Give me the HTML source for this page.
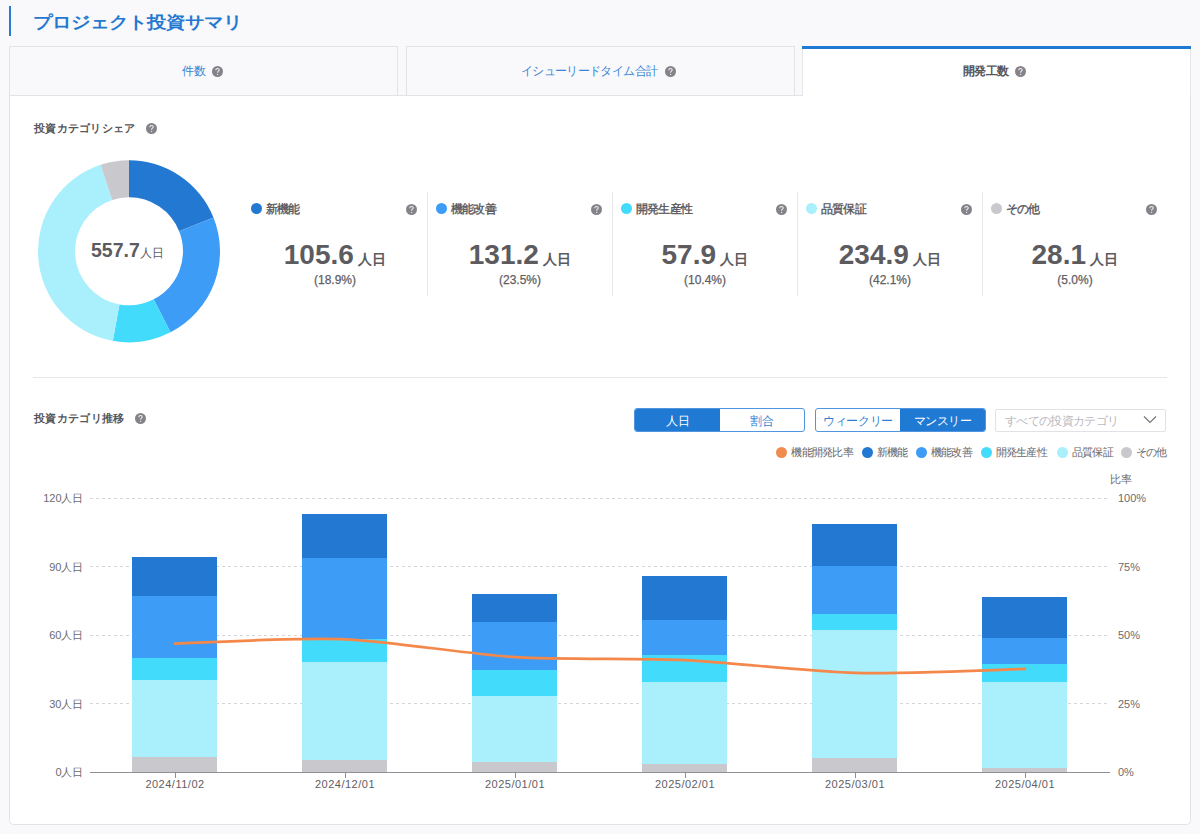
<!DOCTYPE html><html lang="ja"><head><meta charset="utf-8"><style>
html,body{margin:0;padding:0;}
body{width:1200px;height:834px;overflow:hidden;background:#f9f8fb;font-family:"Liberation Sans",sans-serif;position:relative;}
.a{position:absolute;white-space:nowrap;}
.q{position:absolute;border-radius:50%;background:#858389;color:#fff;font-weight:bold;text-align:center;font-family:"Liberation Sans",sans-serif;}
.tab{position:absolute;box-sizing:border-box;border:1px solid #e3e2e7;background:#f9f8fb;}
.dot{position:absolute;border-radius:50%;}
</style></head><body><div class="a" style="left:9px;top:6px;width:2px;height:30px;background:#2b7bd0"></div>
<div class="a" style="left:33px;top:10.5px;font-size:19px;font-weight:bold;color:#2379d0;line-height:24px;transform:scaleY(0.88)">プロジェクト投資サマリ</div>
<div class="a" style="left:9px;top:95px;width:1182px;height:730px;box-sizing:border-box;border:1px solid #e3e2e7;border-top:none;border-radius:0 0 5px 5px;background:#fff"></div>
<div class="tab" style="left:9px;top:46px;width:389px;height:50px;border-bottom:none"></div>
<div class="tab" style="left:406px;top:46px;width:389px;height:50px;border-bottom:none"></div>
<div class="a" style="left:9px;top:95px;width:793px;height:1px;background:#e3e2e7"></div>
<div class="tab" style="left:802px;top:49px;width:389px;height:47px;background:#fff;border-bottom:none;border-top:none;border-color:#e6e5ea"></div>
<div class="a" style="left:802px;top:46px;width:389px;height:3px;background:#2079d2"></div>
<div class="a" style="left:182px;top:63px;font-size:12px;color:#3a85d5;line-height:16px">件数</div>
<svg class="a" style="left:211.9px;top:66.1px" width="11" height="11" viewBox="0 0 11 11"><circle cx="5.5" cy="5.5" r="5.5" fill="#858389"/><path d="M3.85 4.2C3.85 3.15 4.6 2.5 5.55 2.5C6.5 2.5 7.2 3.15 7.2 4.05C7.2 5.1 5.6 5.3 5.6 6.45L5.6 6.8" stroke="#eeeef0" stroke-width="1.05" fill="none"/><circle cx="5.6" cy="8.35" r="0.7" fill="#eeeef0"/></svg>
<div class="a" style="left:521px;top:63px;font-size:12px;letter-spacing:-0.65px;color:#3a85d5;line-height:16px">イシューリードタイム合計</div>
<svg class="a" style="left:664.7px;top:66.1px" width="11" height="11" viewBox="0 0 11 11"><circle cx="5.5" cy="5.5" r="5.5" fill="#858389"/><path d="M3.85 4.2C3.85 3.15 4.6 2.5 5.55 2.5C6.5 2.5 7.2 3.15 7.2 4.05C7.2 5.1 5.6 5.3 5.6 6.45L5.6 6.8" stroke="#eeeef0" stroke-width="1.05" fill="none"/><circle cx="5.6" cy="8.35" r="0.7" fill="#eeeef0"/></svg>
<div class="a" style="left:963px;top:63px;font-size:12px;letter-spacing:-0.7px;font-weight:bold;color:#56555a;line-height:16px">開発工数</div>
<svg class="a" style="left:1015.3px;top:66.1px" width="11" height="11" viewBox="0 0 11 11"><circle cx="5.5" cy="5.5" r="5.5" fill="#858389"/><path d="M3.85 4.2C3.85 3.15 4.6 2.5 5.55 2.5C6.5 2.5 7.2 3.15 7.2 4.05C7.2 5.1 5.6 5.3 5.6 6.45L5.6 6.8" stroke="#eeeef0" stroke-width="1.05" fill="none"/><circle cx="5.6" cy="8.35" r="0.7" fill="#eeeef0"/></svg>
<div class="a" style="left:34px;top:120px;font-size:11px;letter-spacing:0.3px;font-weight:bold;color:#57565b;line-height:16px">投資カテゴリシェア</div>
<svg class="a" style="left:145.8px;top:123.2px" width="11" height="11" viewBox="0 0 11 11"><circle cx="5.5" cy="5.5" r="5.5" fill="#858389"/><path d="M3.85 4.2C3.85 3.15 4.6 2.5 5.55 2.5C6.5 2.5 7.2 3.15 7.2 4.05C7.2 5.1 5.6 5.3 5.6 6.45L5.6 6.8" stroke="#eeeef0" stroke-width="1.05" fill="none"/><circle cx="5.6" cy="8.35" r="0.7" fill="#eeeef0"/></svg>
<svg class="a" style="left:0;top:0" width="260" height="360" viewBox="0 0 260 360"><path d="M129.00 160.30A91 91 0 0 1 213.47 217.45L179.13 231.22A54 54 0 0 0 129.00 197.30Z" fill="#2379d2"/><path d="M213.47 217.45A91 91 0 0 1 170.52 332.28L153.64 299.35A54 54 0 0 0 179.13 231.22Z" fill="#3d9cf6"/><path d="M170.52 332.28A91 91 0 0 1 112.84 340.85L119.41 304.44A54 54 0 0 0 153.64 299.35Z" fill="#42dbfb"/><path d="M112.84 340.85A91 91 0 0 1 100.67 164.82L112.19 199.98A54 54 0 0 0 119.41 304.44Z" fill="#a9effc"/><path d="M100.67 164.82A91 91 0 0 1 129.00 160.30L129.00 197.30A54 54 0 0 0 112.19 199.98Z" fill="#c9c8cd"/></svg>
<div class="a" style="left:91px;top:238px;color:#5c5b60;line-height:24px"><span style="font-size:19.5px;font-weight:bold">557.7</span><span style="font-size:12px">人日</span></div>
<div class="dot" style="left:250.5px;top:203.2px;width:11px;height:11px;background:#2379d2"></div>
<div class="a" style="left:266.0px;top:201px;font-size:12px;letter-spacing:-0.8px;-webkit-text-stroke:0.35px #57565b;color:#57565b;line-height:16px">新機能</div>
<svg class="a" style="left:405.5px;top:203.5px" width="11" height="11" viewBox="0 0 11 11"><circle cx="5.5" cy="5.5" r="5.5" fill="#858389"/><path d="M3.85 4.2C3.85 3.15 4.6 2.5 5.55 2.5C6.5 2.5 7.2 3.15 7.2 4.05C7.2 5.1 5.6 5.3 5.6 6.45L5.6 6.8" stroke="#eeeef0" stroke-width="1.05" fill="none"/><circle cx="5.6" cy="8.35" r="0.7" fill="#eeeef0"/></svg>
<div class="a" style="left:242.5px;top:239px;width:185px;text-align:center;color:#5c5b60;line-height:32px"><span style="font-size:28px;font-weight:bold">105.6</span> <span style="font-size:14px;font-weight:bold">人日</span></div>
<div class="a" style="left:242.5px;top:272px;width:185px;text-align:center;color:#5f5e63;font-size:12px;line-height:16px;-webkit-text-stroke:0.25px #5f5e63">(18.9%)</div>
<div class="a" style="left:427px;top:192px;width:1px;height:104px;background:#e6e5ea"></div>
<div class="dot" style="left:435.5px;top:203.2px;width:11px;height:11px;background:#3d9cf6"></div>
<div class="a" style="left:451.0px;top:201px;font-size:12px;letter-spacing:-0.8px;-webkit-text-stroke:0.35px #57565b;color:#57565b;line-height:16px">機能改善</div>
<svg class="a" style="left:590.5px;top:203.5px" width="11" height="11" viewBox="0 0 11 11"><circle cx="5.5" cy="5.5" r="5.5" fill="#858389"/><path d="M3.85 4.2C3.85 3.15 4.6 2.5 5.55 2.5C6.5 2.5 7.2 3.15 7.2 4.05C7.2 5.1 5.6 5.3 5.6 6.45L5.6 6.8" stroke="#eeeef0" stroke-width="1.05" fill="none"/><circle cx="5.6" cy="8.35" r="0.7" fill="#eeeef0"/></svg>
<div class="a" style="left:427.5px;top:239px;width:185px;text-align:center;color:#5c5b60;line-height:32px"><span style="font-size:28px;font-weight:bold">131.2</span> <span style="font-size:14px;font-weight:bold">人日</span></div>
<div class="a" style="left:427.5px;top:272px;width:185px;text-align:center;color:#5f5e63;font-size:12px;line-height:16px;-webkit-text-stroke:0.25px #5f5e63">(23.5%)</div>
<div class="a" style="left:612px;top:192px;width:1px;height:104px;background:#e6e5ea"></div>
<div class="dot" style="left:620.5px;top:203.2px;width:11px;height:11px;background:#42dbfb"></div>
<div class="a" style="left:636.0px;top:201px;font-size:12px;letter-spacing:-0.8px;-webkit-text-stroke:0.35px #57565b;color:#57565b;line-height:16px">開発生産性</div>
<svg class="a" style="left:775.5px;top:203.5px" width="11" height="11" viewBox="0 0 11 11"><circle cx="5.5" cy="5.5" r="5.5" fill="#858389"/><path d="M3.85 4.2C3.85 3.15 4.6 2.5 5.55 2.5C6.5 2.5 7.2 3.15 7.2 4.05C7.2 5.1 5.6 5.3 5.6 6.45L5.6 6.8" stroke="#eeeef0" stroke-width="1.05" fill="none"/><circle cx="5.6" cy="8.35" r="0.7" fill="#eeeef0"/></svg>
<div class="a" style="left:612.5px;top:239px;width:185px;text-align:center;color:#5c5b60;line-height:32px"><span style="font-size:28px;font-weight:bold">57.9</span> <span style="font-size:14px;font-weight:bold">人日</span></div>
<div class="a" style="left:612.5px;top:272px;width:185px;text-align:center;color:#5f5e63;font-size:12px;line-height:16px;-webkit-text-stroke:0.25px #5f5e63">(10.4%)</div>
<div class="a" style="left:797px;top:192px;width:1px;height:104px;background:#e6e5ea"></div>
<div class="dot" style="left:805.5px;top:203.2px;width:11px;height:11px;background:#a9effc"></div>
<div class="a" style="left:821.0px;top:201px;font-size:12px;letter-spacing:-0.8px;-webkit-text-stroke:0.35px #57565b;color:#57565b;line-height:16px">品質保証</div>
<svg class="a" style="left:960.5px;top:203.5px" width="11" height="11" viewBox="0 0 11 11"><circle cx="5.5" cy="5.5" r="5.5" fill="#858389"/><path d="M3.85 4.2C3.85 3.15 4.6 2.5 5.55 2.5C6.5 2.5 7.2 3.15 7.2 4.05C7.2 5.1 5.6 5.3 5.6 6.45L5.6 6.8" stroke="#eeeef0" stroke-width="1.05" fill="none"/><circle cx="5.6" cy="8.35" r="0.7" fill="#eeeef0"/></svg>
<div class="a" style="left:797.5px;top:239px;width:185px;text-align:center;color:#5c5b60;line-height:32px"><span style="font-size:28px;font-weight:bold">234.9</span> <span style="font-size:14px;font-weight:bold">人日</span></div>
<div class="a" style="left:797.5px;top:272px;width:185px;text-align:center;color:#5f5e63;font-size:12px;line-height:16px;-webkit-text-stroke:0.25px #5f5e63">(42.1%)</div>
<div class="a" style="left:982px;top:192px;width:1px;height:104px;background:#e6e5ea"></div>
<div class="dot" style="left:990.5px;top:203.2px;width:11px;height:11px;background:#c9c8cd"></div>
<div class="a" style="left:1006.0px;top:201px;font-size:12px;letter-spacing:-0.8px;-webkit-text-stroke:0.35px #57565b;color:#57565b;line-height:16px">その他</div>
<svg class="a" style="left:1145.5px;top:203.5px" width="11" height="11" viewBox="0 0 11 11"><circle cx="5.5" cy="5.5" r="5.5" fill="#858389"/><path d="M3.85 4.2C3.85 3.15 4.6 2.5 5.55 2.5C6.5 2.5 7.2 3.15 7.2 4.05C7.2 5.1 5.6 5.3 5.6 6.45L5.6 6.8" stroke="#eeeef0" stroke-width="1.05" fill="none"/><circle cx="5.6" cy="8.35" r="0.7" fill="#eeeef0"/></svg>
<div class="a" style="left:982.5px;top:239px;width:185px;text-align:center;color:#5c5b60;line-height:32px"><span style="font-size:28px;font-weight:bold">28.1</span> <span style="font-size:14px;font-weight:bold">人日</span></div>
<div class="a" style="left:982.5px;top:272px;width:185px;text-align:center;color:#5f5e63;font-size:12px;line-height:16px;-webkit-text-stroke:0.25px #5f5e63">(5.0%)</div>
<div class="a" style="left:33px;top:377px;width:1134px;height:1px;background:#e6e5ea"></div>
<div class="a" style="left:34px;top:410px;font-size:11px;letter-spacing:0.35px;font-weight:bold;color:#57565b;line-height:16px">投資カテゴリ推移</div>
<svg class="a" style="left:134.5px;top:412.8px" width="11" height="11" viewBox="0 0 11 11"><circle cx="5.5" cy="5.5" r="5.5" fill="#858389"/><path d="M3.85 4.2C3.85 3.15 4.6 2.5 5.55 2.5C6.5 2.5 7.2 3.15 7.2 4.05C7.2 5.1 5.6 5.3 5.6 6.45L5.6 6.8" stroke="#eeeef0" stroke-width="1.05" fill="none"/><circle cx="5.6" cy="8.35" r="0.7" fill="#eeeef0"/></svg>
<div class="a" style="left:634px;top:408px;width:171px;height:24px;box-sizing:border-box;border:1px solid #4f95df;border-radius:3px;background:#fff;overflow:hidden"><div class="a" style="left:0;top:0;width:85px;height:22px;background:#2079d3"></div><div class="a" style="left:0;top:0;width:85px;height:22px;line-height:24px;text-align:center;font-size:12px;color:#fff">人日</div><div class="a" style="left:85px;top:0;right:0;height:22px;line-height:24px;text-align:center;font-size:12px;color:#2f7fd4">割合</div></div>
<div class="a" style="left:815px;top:408px;width:171px;height:24px;box-sizing:border-box;border:1px solid #4f95df;border-radius:3px;background:#fff;overflow:hidden"><div class="a" style="left:84px;top:0;right:0;height:22px;background:#2079d3"></div><div class="a" style="left:0;top:0;width:84px;height:22px;line-height:24px;text-align:center;font-size:12px;color:#2f7fd4"><span style="letter-spacing:-0.4px">ウィークリー</span></div><div class="a" style="left:84px;top:0;right:0;height:22px;line-height:24px;text-align:center;font-size:12px;color:#fff"><span style="letter-spacing:-0.5px">マンスリー</span></div></div>
<div class="a" style="left:995px;top:409px;width:171px;height:23px;box-sizing:border-box;border:1px solid #e2e1e8;border-radius:2px;background:#fff"></div>
<div class="a" style="left:1005px;top:413px;font-size:12px;letter-spacing:-0.65px;color:#b9b8be;line-height:16px">すべての投資カテゴリ</div>
<svg class="a" style="left:1140px;top:412px" width="20" height="14"><path d="M4 4.5L10 10.5L16 4.5" stroke="#77767b" stroke-width="1.2" fill="none"/></svg>
<div class="dot" style="left:776.3px;top:446.7px;width:11px;height:11px;background:#f28b50"></div>
<div class="a" style="left:791.3px;top:445px;font-size:11px;letter-spacing:-0.7px;color:#67666b;line-height:14px">機能開発比率</div>
<div class="dot" style="left:861.7px;top:446.7px;width:11px;height:11px;background:#2379d2"></div>
<div class="a" style="left:876.7px;top:445px;font-size:11px;letter-spacing:-0.7px;color:#67666b;line-height:14px">新機能</div>
<div class="dot" style="left:915.8px;top:446.7px;width:11px;height:11px;background:#3d9cf6"></div>
<div class="a" style="left:930.8px;top:445px;font-size:11px;letter-spacing:-0.7px;color:#67666b;line-height:14px">機能改善</div>
<div class="dot" style="left:980.5px;top:446.7px;width:11px;height:11px;background:#42dbfb"></div>
<div class="a" style="left:995.5px;top:445px;font-size:11px;letter-spacing:-0.7px;color:#67666b;line-height:14px">開発生産性</div>
<div class="dot" style="left:1056.7px;top:446.7px;width:11px;height:11px;background:#a9effc"></div>
<div class="a" style="left:1071.7px;top:445px;font-size:11px;letter-spacing:-0.7px;color:#67666b;line-height:14px">品質保証</div>
<div class="dot" style="left:1120.6px;top:446.7px;width:11px;height:11px;background:#c9c8cd"></div>
<div class="a" style="left:1135.6px;top:445px;font-size:11px;letter-spacing:-0.7px;color:#67666b;line-height:14px">その他</div>
<svg class="a" style="left:0;top:0" width="1200" height="834" viewBox="0 0 1200 834"><line x1="90" y1="498.5" x2="1110" y2="498.5" stroke="#d6d5da" stroke-width="1" stroke-dasharray="3 3"/><line x1="90" y1="566.5" x2="1110" y2="566.5" stroke="#d6d5da" stroke-width="1" stroke-dasharray="3 3"/><line x1="90" y1="635.5" x2="1110" y2="635.5" stroke="#d6d5da" stroke-width="1" stroke-dasharray="3 3"/><line x1="90" y1="703.5" x2="1110" y2="703.5" stroke="#d6d5da" stroke-width="1" stroke-dasharray="3 3"/><rect x="132" y="557" width="85" height="39" fill="#2379d2"/><rect x="132" y="596" width="85" height="62" fill="#3d9cf6"/><rect x="132" y="658" width="85" height="22" fill="#42dbfb"/><rect x="132" y="680" width="85" height="77" fill="#a9effc"/><rect x="132" y="757" width="85" height="15" fill="#c9c8cd"/><rect x="302" y="514" width="85" height="44" fill="#2379d2"/><rect x="302" y="558" width="85" height="81" fill="#3d9cf6"/><rect x="302" y="639" width="85" height="23" fill="#42dbfb"/><rect x="302" y="662" width="85" height="98" fill="#a9effc"/><rect x="302" y="760" width="85" height="12" fill="#c9c8cd"/><rect x="472" y="594" width="85" height="28" fill="#2379d2"/><rect x="472" y="622" width="85" height="48" fill="#3d9cf6"/><rect x="472" y="670" width="85" height="26" fill="#42dbfb"/><rect x="472" y="696" width="85" height="66" fill="#a9effc"/><rect x="472" y="762" width="85" height="10" fill="#c9c8cd"/><rect x="642" y="576" width="85" height="44" fill="#2379d2"/><rect x="642" y="620" width="85" height="35" fill="#3d9cf6"/><rect x="642" y="655" width="85" height="27" fill="#42dbfb"/><rect x="642" y="682" width="85" height="82" fill="#a9effc"/><rect x="642" y="764" width="85" height="8" fill="#c9c8cd"/><rect x="812" y="524" width="85" height="42" fill="#2379d2"/><rect x="812" y="566" width="85" height="48" fill="#3d9cf6"/><rect x="812" y="614" width="85" height="16" fill="#42dbfb"/><rect x="812" y="630" width="85" height="128" fill="#a9effc"/><rect x="812" y="758" width="85" height="14" fill="#c9c8cd"/><rect x="982" y="597" width="85" height="41" fill="#2379d2"/><rect x="982" y="638" width="85" height="26" fill="#3d9cf6"/><rect x="982" y="664" width="85" height="18" fill="#42dbfb"/><rect x="982" y="682" width="85" height="86" fill="#a9effc"/><rect x="982" y="768" width="85" height="4" fill="#c9c8cd"/><line x1="90" y1="772.5" x2="1110" y2="772.5" stroke="#8f8e94" stroke-width="1"/><line x1="175.5" y1="772" x2="175.5" y2="778" stroke="#8f8e94" stroke-width="1"/><line x1="345.5" y1="772" x2="345.5" y2="778" stroke="#8f8e94" stroke-width="1"/><line x1="515.5" y1="772" x2="515.5" y2="778" stroke="#8f8e94" stroke-width="1"/><line x1="685.5" y1="772" x2="685.5" y2="778" stroke="#8f8e94" stroke-width="1"/><line x1="855.5" y1="772" x2="855.5" y2="778" stroke="#8f8e94" stroke-width="1"/><line x1="1025.5" y1="772" x2="1025.5" y2="778" stroke="#8f8e94" stroke-width="1"/><path d="M175 643.7C175.0 643.7 302.6 637.6 345 639.3C387.6 641.0 472.4 654.5 515 657.1C557.4 659.7 642.6 658.1 685 660.1C727.6 662.1 812.4 671.8 855 672.9C897.4 674.0 1025.0 668.8 1025 668.8" stroke="#f4884a" stroke-width="2.7" fill="none" stroke-linecap="round"/></svg>
<div class="a" style="left:0;width:83.5px;text-align:right;top:490.3px;font-size:11px;color:#6c6b70;line-height:16px">120人日</div>
<div class="a" style="left:0;width:83.5px;text-align:right;top:558.7px;font-size:11px;color:#6c6b70;line-height:16px">90人日</div>
<div class="a" style="left:0;width:83.5px;text-align:right;top:627.0px;font-size:11px;color:#6c6b70;line-height:16px">60人日</div>
<div class="a" style="left:0;width:83.5px;text-align:right;top:695.5px;font-size:11px;color:#6c6b70;line-height:16px">30人日</div>
<div class="a" style="left:0;width:83.5px;text-align:right;top:764.0px;font-size:11px;color:#6c6b70;line-height:16px">0人日</div>
<div class="a" style="left:1118px;top:490.3px;font-size:11px;color:#6c6b70;line-height:16px">100%</div>
<div class="a" style="left:1118px;top:558.7px;font-size:11px;color:#6c6b70;line-height:16px">75%</div>
<div class="a" style="left:1118px;top:627.0px;font-size:11px;color:#6c6b70;line-height:16px">50%</div>
<div class="a" style="left:1118px;top:695.5px;font-size:11px;color:#6c6b70;line-height:16px">25%</div>
<div class="a" style="left:1118px;top:764.0px;font-size:11px;color:#6c6b70;line-height:16px">0%</div>
<div class="a" style="left:1110px;top:471px;font-size:11px;color:#6c6b70;line-height:16px">比率</div>
<div class="a" style="left:125px;width:100px;text-align:center;top:776px;font-size:11px;letter-spacing:0.5px;color:#5f5e63;line-height:16px">2024/11/02</div>
<div class="a" style="left:295px;width:100px;text-align:center;top:776px;font-size:11px;letter-spacing:0.5px;color:#5f5e63;line-height:16px">2024/12/01</div>
<div class="a" style="left:465px;width:100px;text-align:center;top:776px;font-size:11px;letter-spacing:0.5px;color:#5f5e63;line-height:16px">2025/01/01</div>
<div class="a" style="left:635px;width:100px;text-align:center;top:776px;font-size:11px;letter-spacing:0.5px;color:#5f5e63;line-height:16px">2025/02/01</div>
<div class="a" style="left:805px;width:100px;text-align:center;top:776px;font-size:11px;letter-spacing:0.5px;color:#5f5e63;line-height:16px">2025/03/01</div>
<div class="a" style="left:975px;width:100px;text-align:center;top:776px;font-size:11px;letter-spacing:0.5px;color:#5f5e63;line-height:16px">2025/04/01</div></body></html>
